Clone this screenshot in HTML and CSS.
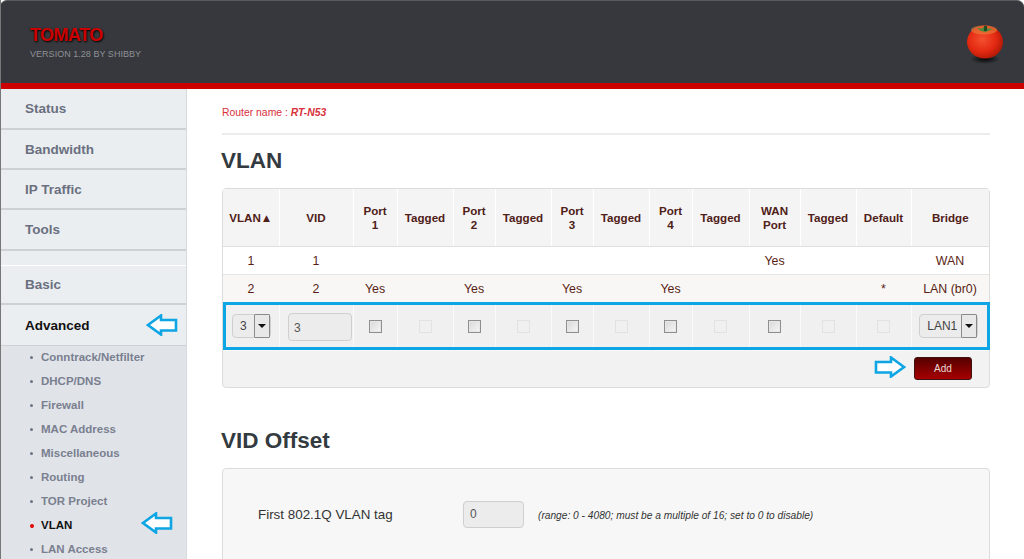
FILE: index.html
```html
<!DOCTYPE html>
<html lang="en">
<head>
<meta charset="utf-8">
<title>Tomato - VLAN</title>
<link rel="stylesheet" href="styles.css">
</head>
<body>
<div class="page">
  <header class="header">
    <div class="brand">
      <div class="logo">TOMATO</div>
      <div class="version">VERSION 1.28 BY SHIBBY</div>
    </div>
    <svg class="tomato" width="44" height="50" viewBox="0 0 44 50">
      <defs>
        <radialGradient id="tg" cx="42%" cy="42%" r="62%">
          <stop offset="0" stop-color="#f4502f"/>
          <stop offset="0.6" stop-color="#e42a12"/>
          <stop offset="1" stop-color="#b01806"/>
        </radialGradient>
        <radialGradient id="ts"><stop offset="0" stop-color="#000" stop-opacity=".9"/><stop offset="1" stop-color="#000" stop-opacity="0"/></radialGradient>
      </defs>
      <ellipse cx="22" cy="38" rx="15" ry="5" fill="url(#ts)"/>
      <ellipse cx="22" cy="21" rx="18" ry="16.5" fill="url(#tg)"/>
      <ellipse cx="21" cy="9" rx="13" ry="4.5" fill="#e8843f" opacity=".6"/>
      <path d="M14 7 L19 7.5 L22 5 L25 7.5 L30 8 L25 10 L22 11 L18 10 Z" fill="#4a8a3c"/>
      <rect x="21" y="5" width="3" height="5" fill="#1e4d22"/>
    </svg>
  </header>
  <div class="body">
    <nav class="side">
      <a class="nav-item nav-first">Status</a>
      <a class="nav-item">Bandwidth</a>
      <a class="nav-item">IP Traffic</a>
      <a class="nav-item nav-last">Tools</a>
      <a class="nav-item nav-basic">Basic</a>
      <a class="nav-item nav-active">Advanced</a>
      <ul class="sub">
        <li>Conntrack/Netfilter</li>
        <li>DHCP/DNS</li>
        <li>Firewall</li>
        <li>MAC Address</li>
        <li>Miscellaneous</li>
        <li>Routing</li>
        <li>TOR Project</li>
        <li class="sub-active">VLAN</li>
        <li>LAN Access</li>
      </ul>
      <svg class="arrow arrow-adv" width="32" height="22" viewBox="0 0 32 22"><path d="M2 11 L15 1.5 V6 H30 V16.5 H15 V20.5 Z"/></svg>
      <svg class="arrow arrow-vlan" width="32" height="22" viewBox="0 0 32 22"><path d="M2 11 L15 1.5 V6 H30 V16.5 H15 V20.5 Z"/></svg>
    </nav>
    <main class="main">
      <div class="router">Router name : <b>RT-N53</b></div>
      <h2 class="title-vlan">VLAN</h2>
      <div class="table-wrap">
        <table class="vlan">
          <colgroup>
            <col class="c-vlan"><col class="c-vid"><col class="c-p1"><col class="c-t1"><col class="c-p2"><col class="c-t2"><col class="c-p3"><col class="c-t3"><col class="c-p4"><col class="c-t4"><col class="c-wan"><col class="c-t5"><col class="c-def"><col class="c-br">
          </colgroup>
          <thead>
            <tr>
              <th>VLAN▲</th><th>VID</th>
              <th>Port<br>1</th><th>Tagged</th>
              <th>Port<br>2</th><th>Tagged</th>
              <th>Port<br>3</th><th>Tagged</th>
              <th>Port<br>4</th><th>Tagged</th>
              <th>WAN<br>Port</th><th>Tagged</th>
              <th>Default</th><th>Bridge</th>
            </tr>
          </thead>
          <tbody>
            <tr class="row-a">
              <td>1</td><td>1</td><td></td><td></td><td></td><td></td><td></td><td></td><td></td><td></td><td>Yes</td><td></td><td></td><td>WAN</td>
            </tr>
            <tr class="row-b">
              <td>2</td><td>2</td><td>Yes</td><td></td><td>Yes</td><td></td><td>Yes</td><td></td><td>Yes</td><td></td><td></td><td></td><td>*</td><td>LAN (br0)</td>
            </tr>
            <tr class="row-edit">
              <td><span class="sel sel-num"><span class="sel-val">3</span><span class="sel-btn"></span></span></td>
              <td><span class="field field-vid">3</span></td>
              <td><span class="chk"></span></td><td><span class="chk off"></span></td>
              <td><span class="chk"></span></td><td><span class="chk off"></span></td>
              <td><span class="chk"></span></td><td><span class="chk off"></span></td>
              <td><span class="chk"></span></td><td><span class="chk off"></span></td>
              <td><span class="chk"></span></td><td><span class="chk off"></span></td>
              <td><span class="chk off"></span></td>
              <td><span class="sel sel-lan"><span class="sel-val">LAN1</span><span class="sel-btn"></span></span></td>
            </tr>
          </tbody>
        </table>
        <div class="foot"><span class="add">Add</span></div>
        <div class="highlight"></div>
        <svg class="arrow arrow-add" width="32" height="22" viewBox="0 0 32 22"><path d="M30 11 L17 1.5 V6 H2 V16.5 H17 V20.5 Z"/></svg>
      </div>
      <h2 class="title-vid">VID Offset</h2>
      <div class="offset">
        <span class="off-label">First 802.1Q VLAN tag</span>
        <span class="field field-off">0</span>
        <span class="off-note">(range: 0 - 4080; must be a multiple of 16; set to 0 to disable)</span>
      </div>
    </main>
  </div>
</div>
</body>
</html>
```
FILE: styles.css
```css
* { box-sizing: border-box; }
html, body { margin: 0; padding: 0; height: 100%; background: #fff; overflow: hidden; }
body { font-family: "Liberation Sans", Arial, sans-serif; }
.page { width: 1024px; height: 559px; display: flex; flex-direction: column; overflow: hidden; border-left: 1px solid #777; }
.header {
  height: 89px; flex: none; display: flex; justify-content: space-between; align-items: flex-start;
  background: #36383d; border-bottom: 6px solid #cc0000; border-top: 1px solid #5a5c60;
  border-radius: 7px 7px 0 0; padding: 0 17px 0 30px; margin-left: -1px;
}
.brand { padding-top: 24px; }
.logo { font-size: 18px; line-height: 20px; font-weight: bold; color: #cc0000; text-shadow: 1px 1px 2px #000; letter-spacing: -0.55px; }
.version { font-size: 9px; line-height: 11px; margin-top: 4px; color: #8f9196; letter-spacing: 0.03px; }
.tomato { margin-top: 20px; }
.body { flex: 1; display: flex; min-height: 0; }
.side {
  position: relative; width: 186px; flex: none; background: #ebeef1; border-right: 1px solid #d5dade;
  display: flex; flex-direction: column;
}
.nav-item {
  display: flex; align-items: center; height: 40px; padding-left: 24px; flex: none;
  font-size: 13.5px; font-weight: bold; color: #6a7080; background: #ebeef1; border-bottom: 2px solid #cdd1d6;
}
.nav-first { height: 41px; }
.nav-last { height: 41px; margin-bottom: 14px; }
.nav-basic { border-top: 1px solid #fff; height: 40px; }
.nav-active { color: #111; height: 41px; border-bottom: 1px solid #cdd1d6; }
.sub { list-style: none; margin: 0; padding: 0; background: #e0e4e8; flex: 1; }
.sub li {
  position: relative; height: 24px; line-height: 23px; padding-left: 40px;
  font-size: 11.5px; font-weight: bold; color: #7a7f90;
}
.sub li::before { content: ""; position: absolute; left: 29px; top: 10px; width: 3px; height: 3px; border-radius: 50%; background: #6a7585; }
.sub .sub-active { color: #111; }
.sub .sub-active::before { background: #e00000; width: 4px; height: 4px; }
.arrow { position: absolute; }
.arrow path { fill: #fff; stroke: #0ea5e4; stroke-width: 2.6; }
.arrow-adv { left: 145px; top: 225px; }
.arrow-vlan { left: 140px; top: 423px; }
.arrow-add { left: 651px; top: 167px; }
.main { flex: 1; min-width: 0; padding: 18px 34px 0 35px; }
.router { font-size: 10.4px; line-height: 12px; color: #d8303a; padding-bottom: 14px; border-bottom: 2px solid #ececec; }
.router b { font-style: italic; }
h2 { margin: -1px 0 0 -1px; font-size: 22.5px; line-height: 26px; font-weight: bold; color: #333a40; }
.title-vlan { margin-top: 13px; margin-bottom: 14px; }
.table-wrap { position: relative; width: 768px; border: 1px solid #dcdcdc; border-radius: 4px; background: #f2f2f2; }
.vlan { width: 100%; border-collapse: collapse; table-layout: fixed; color: #5a1f14; font-size: 12.4px; }
.vlan th { height: 57px; padding: 1px 0 0; background: #f4f4f4; font-size: 11.6px; line-height: 14px; font-weight: bold; color: #4f2018; border-right: 1px solid #fff; border-bottom: 1px solid #dfdfdf; text-align: center; }
.vlan td { padding: 0; text-align: center; border-bottom: 1px solid #e6e6e6; }
.vlan .row-a td, .vlan .row-b td { padding-top: 2px; }
.vlan th:last-child, .vlan td:last-child { border-right: 0; }
.c-vlan { width: 56px; } .c-vid { width: 74px; } .c-p1 { width: 44px; } .c-t1 { width: 56px; }
.c-p2 { width: 42px; } .c-t2 { width: 56px; } .c-p3 { width: 42px; } .c-t3 { width: 56px; }
.c-p4 { width: 43px; } .c-t4 { width: 57px; } .c-wan { width: 51px; } .c-t5 { width: 56px; }
.c-def { width: 55px; } .c-br { width: 78px; }
.row-a td { height: 28px; background: #fff; }
.row-b td { height: 28px; background: #f8f7f6; }
.row-edit td { height: 48px; background: #f0f0f0; border-right: 1px solid #fafafa; border-bottom: 0; }
.sel { display: inline-flex; align-items: center; height: 24px; border: 1px solid #cfcfcf; border-radius: 4px; background: #ececec; color: #444; font-size: 12px; vertical-align: middle; }
.sel-num { width: 39px; margin-left: 1px; }
.sel-lan { width: 59px; margin-right: 4px; }
.sel-lan .sel-val { padding-left: 4px; }
.sel-val { flex: 1; text-align: center; }
.sel-btn { position: relative; width: 16px; height: 24px; flex: none; background: #e8e8e8; border: 1px solid #8a8a8a; border-radius: 1px; }
.sel-btn::after { content: ""; position: absolute; left: 3px; top: 9px; border: 4px solid transparent; border-top: 4px solid #111; border-bottom: 0; }
.field { display: inline-block; background: #ececec; border: 1px solid #cfcfcf; border-radius: 4px; color: #555; font-size: 12px; text-align: left; vertical-align: middle; }
.field-vid { width: 64px; height: 28px; line-height: 28px; padding-left: 5px; margin: 2px 0 0 8px; }
.chk { display: inline-block; width: 13px; height: 13px; vertical-align: middle; background: linear-gradient(135deg, #d8d8d8, #f6f6f6); border: 1px solid #8f8f8f; box-shadow: inset 0 0 0 1px #e6e6e6; }
.chk.off { background: #f0f0f0; border-color: #e2e2e2; box-shadow: none; }
.foot { height: 37px; display: flex; align-items: center; justify-content: flex-end; padding: 0 17px 2px 0; border-top: 1px solid #f8f8f8; }
.add { width: 58px; height: 23px; line-height: 21px; text-align: center; font-size: 10px; color: #e8d8d8; background: linear-gradient(#550000, #a80000); border: 1px solid #3e1010; border-radius: 3px; }
.highlight { position: absolute; left: 0; top: 113px; width: 767px; height: 48px; border: 3px solid #0ea5e4; }
.title-vid { margin-top: 40px; margin-bottom: 14px; }
.offset { height: 160px; width: 768px; background: #f7f7f7; border: 1px solid #dcdcdc; border-radius: 4px; display: flex; align-items: flex-start; padding: 32px 0 0 35px; }
.off-label { width: 205px; line-height: 28px; font-size: 13.4px; color: #333; }
.field-off { width: 61px; height: 27px; line-height: 25px; padding-left: 6px; background: #ececec; }
.off-note { margin-left: 14px; line-height: 30px; font-size: 10.2px; font-style: italic; color: #333; }
```
